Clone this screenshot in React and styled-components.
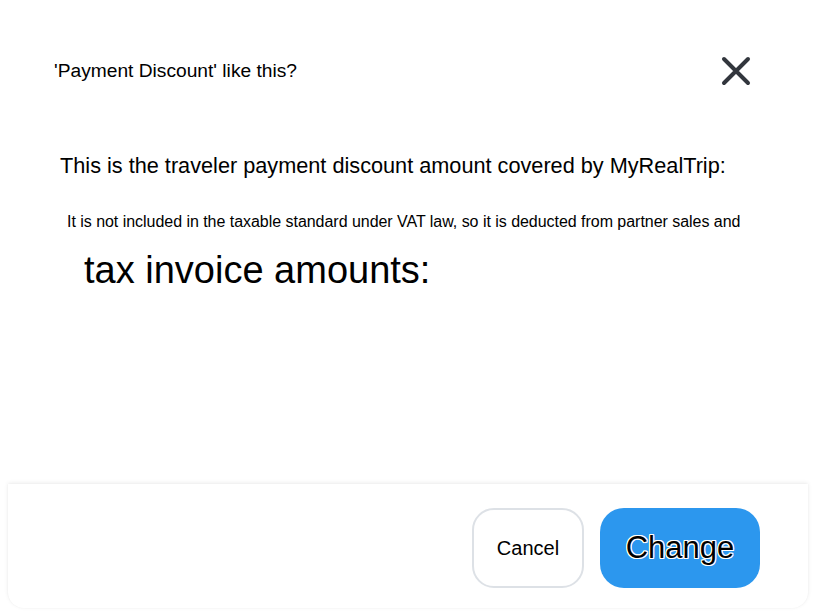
import React from 'react';
import styled, { createGlobalStyle } from 'styled-components';

const GlobalStyle = createGlobalStyle`
    html, body {
        margin: 0;
        padding: 0;
        background: #ffffff;
    }

    body {
        font-family: "Liberation Sans", Arial, sans-serif;
        color: #000000;
    }
`;

const App = () => {
    return (
        <Modal>
            <GlobalStyle />
            <Header>
                <Title>'Payment Discount' like this?</Title>
                <CloseButton aria-label="Close">
                    <svg width="30" height="30" viewBox="0 0 30 30" fill="none">
                        <path d="M3 3L27 27M27 3L3 27" stroke="#32363d" strokeWidth="4" strokeLinecap="round" />
                    </svg>
                </CloseButton>
            </Header>
            <Body>
                <Lead>This is the traveler payment discount amount covered by MyRealTrip:</Lead>
                <Note>It is not included in the taxable standard under VAT law, so it is deducted from partner sales and</Note>
                <Big>tax invoice amounts:</Big>
            </Body>
            <Footer>
                <Button>Cancel</Button>
                <Button primary>Change</Button>
            </Footer>
        </Modal>
    );
};

const Modal = styled.div`
    width: 816px;
    height: 616px;
    display: flex;
    flex-direction: column;
    overflow: hidden;
`;

const Header = styled.div`
    display: flex;
    align-items: center;
    justify-content: space-between;
    padding: 55px 65px 0 54px;
    height: 32px;
`;

const Title = styled.h2`
    margin: 0;
    font-size: 19.2px;
    font-weight: 400;
`;

const CloseButton = styled.button`
    display: flex;
    align-items: center;
    justify-content: center;
    padding: 0;
    border: none;
    background: transparent;
    cursor: pointer;
`;

const Body = styled.div`
    flex: 1;
    display: flex;
    flex-direction: column;
    padding: 0 0 0 60px;
`;

const Lead = styled.p`
    margin: 66px 0 0;
    font-size: 21.7px;
    line-height: 26px;
`;

const Note = styled.p`
    margin: 33px 0 0 7px;
    font-size: 16px;
    line-height: 20px;
    letter-spacing: -0.035px;
`;

const Big = styled.p`
    margin: 16px 0 0 24px;
    font-size: 38px;
    line-height: 44px;
`;

const Footer = styled.div`
    margin: 0 8px 8px;
    height: 124px;
    box-sizing: border-box;
    display: flex;
    justify-content: flex-end;
    align-items: flex-start;
    gap: 16px;
    padding: 24px 48px 0 0;
    background: #ffffff;
    border-radius: 0 0 16px 16px;
    box-shadow: 0 -1px 4px rgba(0, 0, 0, 0.08), 0 0 2px rgba(0, 0, 0, 0.04);
`;

const Button = styled.button`
    height: 80px;
    box-sizing: border-box;
    min-width: ${props => (props.primary ? '160px' : '112px')};
    padding: 0 ${props => (props.primary ? '24px' : '20px')};
    border-radius: ${props => (props.primary ? '24px' : '22px')};
    border: ${props => (props.primary ? 'none' : '2px solid #dde1e6')};
    background: ${props => (props.primary ? '#2c97ee' : '#ffffff')};
    color: #000000;
    font-family: "Liberation Sans", Arial, sans-serif;
    font-size: ${props => (props.primary ? '31px' : '20px')};
    cursor: pointer;
    text-shadow: ${props => (props.primary
        ? '1px 0 0 #fff, -1px 0 0 #fff, 0 1px 0 #fff, 0 -1px 0 #fff, 1px 1px 0 #fff, -1px -1px 0 #fff, 1px -1px 0 #fff, -1px 1px 0 #fff'
        : 'none')};
`;

export default App;
